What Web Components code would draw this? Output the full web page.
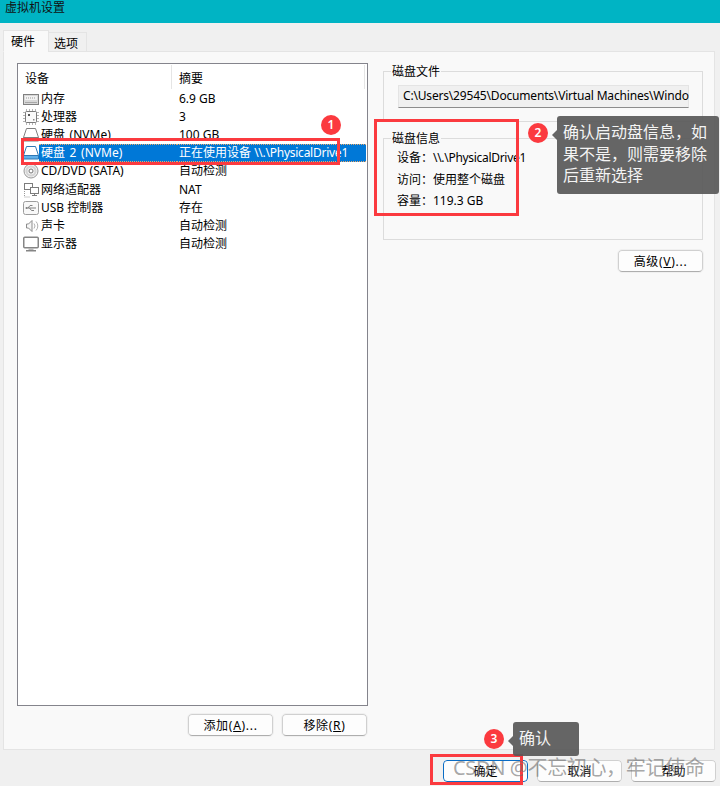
<!DOCTYPE html>
<html lang="zh"><head><meta charset="utf-8"><title>虚拟机设置</title>
<style>
html,body{margin:0;padding:0;width:720px;height:786px;overflow:hidden;background:#f0f0f0}
body{font:12px/16px "Noto Sans","Noto Sans CJK SC",sans-serif;color:#000}
</style></head><body>
<vm-dialog>
  <device-row slot="rows" icon="mem" summary="6.9 GB">内存</device-row>
  <device-row slot="rows" icon="cpu" summary="3">处理器</device-row>
  <device-row slot="rows" icon="disk" summary="100 GB" style="word-spacing:1.5px">硬盘 (NVMe)</device-row>
  <device-row slot="rows" icon="disk" selected summary="正在使用设备 \\.\PhysicalDrive1" style="word-spacing:1.5px">硬盘 2 (NVMe)</device-row>
  <device-row slot="rows" icon="cd" summary="自动检测">CD/DVD (SATA)</device-row>
  <device-row slot="rows" icon="net" summary="NAT">网络适配器</device-row>
  <device-row slot="rows" icon="usb" summary="存在">USB 控制器</device-row>
  <device-row slot="rows" icon="snd" summary="自动检测">声卡</device-row>
  <device-row slot="rows" icon="mon" summary="自动检测">显示器</device-row>
</vm-dialog>
<script>
const ICONS={
mem:'<rect x=".5" y="3.500" width="15" height="10" fill="#d8d8d8" stroke="#808080"/><rect x="2" y="5" width="12" height="4" fill="#f2f2f2"/><path d="M3 7h10" stroke="#999" stroke-dasharray="1 1"/><path d="M2 11.500h12" stroke="#a8a8a8"/>',
cpu:'<path d="M3.500 0v16M6.500 0v16M9.500 0v16M12.500 0v16M0 3.500h16M0 6.500h16M0 9.500h16M0 12.500h16" stroke="#b4b4b4"/><rect x="2.500" y="2.500" width="11" height="11" rx="1" fill="#fafafa" stroke="#7c7c7c"/><rect x="5" y="5" width="2" height="2" fill="#555"/><rect x="10" y="10" width="1.500" height="1.500" fill="#888"/>',
disk:'<path d="M3.500 1.500h9l3 9h-15z" fill="#fff" stroke="#808080"/><path d="M.5 10.500h15v3.500h-15z" fill="#ececec" stroke="#808080"/>',
diskSel:'<path d="M3.500 1.500h9l3 9h-15z" fill="#fff" stroke="#2f78b4"/><path d="M.5 10.500h15v3.500h-15z" fill="#5fb0ea" stroke="#2f78b4"/>',
cd:'<circle cx="8" cy="8" r="7" fill="#f0f0f0" stroke="#999"/><circle cx="8" cy="8" r="4.500" fill="none" stroke="#d4d4d4" stroke-width="2"/><circle cx="8" cy="8" r="2" fill="#fff" stroke="#777"/>',
net:'<rect x="1.500" y="1.500" width="8" height="6" fill="#fff" stroke="#7c7c7c"/><rect x="7.500" y="5.500" width="8" height="6" fill="#fff" stroke="#7c7c7c"/><path d="M11.500 11.500v2M9 13.500h5" stroke="#7c7c7c"/><path d="M1.500 9v6h6" fill="none" stroke="#999" stroke-dasharray="1 1"/>',
usb:'<rect x=".5" y="1.500" width="15" height="13" rx="2" fill="#f8f8f8" stroke="#9c9c9c"/><path d="M3 8h10M5 8l2-2.500h2.500M6.500 8l2 2.500h2.500" fill="none" stroke="#808080"/><circle cx="3.500" cy="8" r="1" fill="#808080"/>',
snd:'<path d="M3.500 6h2l3.500-3.500v11L5.500 10h-2z" fill="#f6f6f6" stroke="#8c8c8c"/><path d="M11 5.500a4 4 0 0 1 0 5M13 3.500a6.500 6.500 0 0 1 0 9" fill="none" stroke="#b0b0b0"/>',
mon:'<rect x=".75" y="1.250" width="14.500" height="10.500" rx="1" fill="#fff" stroke="#858585" stroke-width="1.500"/><path d="M5.500 12h5v2h-5z" fill="#b8b8b8"/><path d="M3 14.750h10" stroke="#858585" stroke-width="1.500"/>'
};
function def(name,css,html,init){
  customElements.define(name,class extends HTMLElement{
    connectedCallback(){
      if(this.shadowRoot)return;
      const r=this.attachShadow({mode:'open'});
      r.innerHTML='<style>'+css+'</style>'+(typeof html==='function'?html(this):html);
      init&&init(this,r);
    }
  });
}
def('vm-title',':host{display:block;height:23px;background:#00b4c4;color:#111;font-size:12px;line-height:16px;padding:0 0 0 5px;box-sizing:border-box}','<slot></slot>');
def('vm-tabs',`:host{display:flex;align-items:flex-end;height:22px;margin:7px 0 -1px 3px;position:relative;z-index:1}
span{display:block;box-sizing:border-box;border:1px solid #e4e4e4}
.a{width:46px;height:22px;background:#f9f9f9;border-bottom-color:#f9f9f9;line-height:21px;padding-left:7px}
.b{width:39px;height:20px;margin-left:-1px;background:#f0f0f0;line-height:21px;padding-left:5px}`,'<span class="a">硬件</span><span class="b">选项</span>');
def('vm-panel',`:host{display:flex;box-sizing:border-box;width:712px;height:699px;margin-left:3px;background:#f9f9f9;border:1px solid #e4e4e4;padding:11px 11px 0 13px;gap:15px}
.l{width:351px;display:flex;flex-direction:column}.r{width:321px;display:flex;flex-direction:column}`,
'<div class="l"><slot name="left"></slot></div><div class="r"><slot name="right"></slot></div>');
def('device-list',`:host{display:block;box-sizing:border-box;width:351px;height:643px;background:#fff;border:1px solid #84848c}
.h{display:grid;grid-template-columns:154px 193px;height:25px;margin-top:1px}
.h div{padding-left:7px;line-height:27px;border-right:1px solid #e5e5e5;height:24px}
.rows{display:block}`,
'<div class="h"><div>设备</div><div>摘要</div></div><div class="rows"><slot></slot></div>');
def('device-row',`:host{display:grid;grid-template-columns:16px 138px 1fr;height:18.1px;line-height:18px;align-items:center;white-space:nowrap;padding-left:5px}
svg{width:16px;height:16px;display:block}
.n{padding-left:2px;height:18px}
.s{padding-left:2px;height:18px}
.sel{background:#0078d7;color:#fff;box-sizing:border-box;border-top:1px dotted #e9a86a;border-bottom:1px dotted #e9a86a;line-height:16px}
.lat{letter-spacing:-.25px}`,
t=>{const sel=t.hasAttribute('selected');const ic=ICONS[sel?'diskSel':t.getAttribute('icon')];
 const s=t.getAttribute('summary').replace(/(\\\\.*)$/,'<span class="lat">$1</span>');
 return `<svg viewBox="0 0 16 16">${ic}</svg><div class="n ${sel?'sel':''}"><slot></slot></div><div class="s ${sel?'sel':''}" style="word-spacing:0;${sel?'margin-right:1px':''}">${s}</div>`});
def('vm-button',`:host{display:inline-block}
button{display:block;box-sizing:border-box;width:85px;height:22px;padding:2px 0 0;background:#fdfdfd;border:1px solid #d0d0d0;border-bottom-color:#aeaeae;border-radius:4px;font:inherit;letter-spacing:inherit;color:#000;line-height:18px;outline:1px solid #f0f0f0}
:host([primary]) button{border-color:#0a6cc4}`,'<button><slot></slot></button>');
def('group-box',`:host{display:block}
fieldset{margin:0;box-sizing:border-box;border:1px solid #dcdcdc;padding:0;min-width:0}
legend{margin-left:7px;padding:0 1px;line-height:18px;height:16px}`,t=>`<fieldset><legend>${t.getAttribute('label')}</legend><slot></slot></fieldset>`);
def('path-field',`:host{display:block;box-sizing:border-box;height:23px;width:291px;margin:6px 0 13px 14px;background:#f0f0f0;border:1px solid #e4e4e4;border-bottom-color:#8c8c8c;padding:0 4px;line-height:20px;white-space:nowrap;letter-spacing:-.18px}`,'<slot></slot>');
def('info-lines',`:host{display:block;padding:1px 0 27px 13px;line-height:21.500px;white-space:nowrap;height:65px}
::slotted(span){letter-spacing:-.3px}`,'<slot></slot>');
def('red-box',`:host{display:block;position:absolute;box-sizing:border-box;border:3px solid #fb3a3f;pointer-events:none}`,'');
def('num-badge',`:host{display:block;position:absolute;width:20px;height:20px;border-radius:50%;background:#fb3a3f;color:#fff;font-size:12px;font-weight:600;line-height:20px;text-align:center}`,'<slot></slot>');
def('call-out',`:host{display:block;position:absolute;box-sizing:border-box;background:rgba(88,88,88,.92);color:#f4f4f4;font-size:16px;line-height:21.500px;border-radius:3px;padding:6px 6px}
:host::before{content:"";position:absolute;left:-5px;top:var(--ay,14px);border:5px solid transparent;border-left:0;border-right-color:rgba(88,88,88,.92)}`,'<slot></slot>');
def('water-mark',`:host{display:block;position:absolute;color:rgba(110,110,110,.62);font-size:20px;line-height:26px;white-space:nowrap;pointer-events:none;letter-spacing:-.35px}`,'<slot></slot>');
def('vm-footer',`:host{display:flex;justify-content:flex-end;gap:9px;padding:10px 4px 0 0}`,'<slot></slot>');
def('left-actions',`:host{display:flex;justify-content:flex-end;gap:9px;margin-top:8px;padding-right:1px}`,'<slot></slot>');
customElements.define('vm-dialog',class extends HTMLElement{
 connectedCallback(){
  if(this.shadowRoot)return;
  const r=this.attachShadow({mode:'open'});
  r.innerHTML=`<style>
:host{display:block;position:relative;width:720px;height:786px;overflow:hidden;background:#f0f0f0}
group-box+group-box{margin-top:8px}
.adv{align-self:flex-end;margin:10px 0 0}
.wide{letter-spacing:.7px}
u{text-underline-offset:1px}
</style>
<vm-title>虚拟机设置</vm-title>
<vm-tabs></vm-tabs>
<vm-panel>
  <device-list slot="left"><slot name="rows"></slot></device-list>
  <left-actions slot="left"><vm-button class="wide">添加(<u>A</u>)...</vm-button><vm-button class="wide">移除(<u>R</u>)</vm-button></left-actions>
  <group-box slot="right" label="磁盘文件"><path-field>C:\\Users\\29545\\Documents\\Virtual Machines\\Windo</path-field></group-box>
  <group-box slot="right" label="磁盘信息"><info-lines>设备：<span>\\\\.\\PhysicalDrive1</span><br>访问：使用整个磁盘<br>容量：119.3 GB</info-lines></group-box>
  <vm-button slot="right" class="adv wide">高级(<u>V</u>)...</vm-button>
</vm-panel>
<vm-footer><vm-button primary>确定</vm-button><vm-button>取消</vm-button><vm-button>帮助</vm-button></vm-footer>
<red-box style="left:21px;top:138px;width:319px;height:27px"></red-box>
<red-box style="left:374px;top:119px;width:145px;height:97px"></red-box>
<red-box style="left:430px;top:754px;width:93px;height:31px"></red-box>
<num-badge style="left:321px;top:115px">1</num-badge>
<num-badge style="left:528px;top:123px">2</num-badge>
<num-badge style="left:484px;top:729px">3</num-badge>
<call-out style="left:557px;top:116px;width:162px;height:78px">确认启动盘信息，如<br>果不是，则需要移除<br>后重新选择</call-out>
<call-out style="left:513px;top:722px;width:66px;height:34px">确认</call-out>
<water-mark style="left:453px;top:755px">CSDN @不忘初心，牢记使命</water-mark>`;
 }
});
</script>
</body></html>
